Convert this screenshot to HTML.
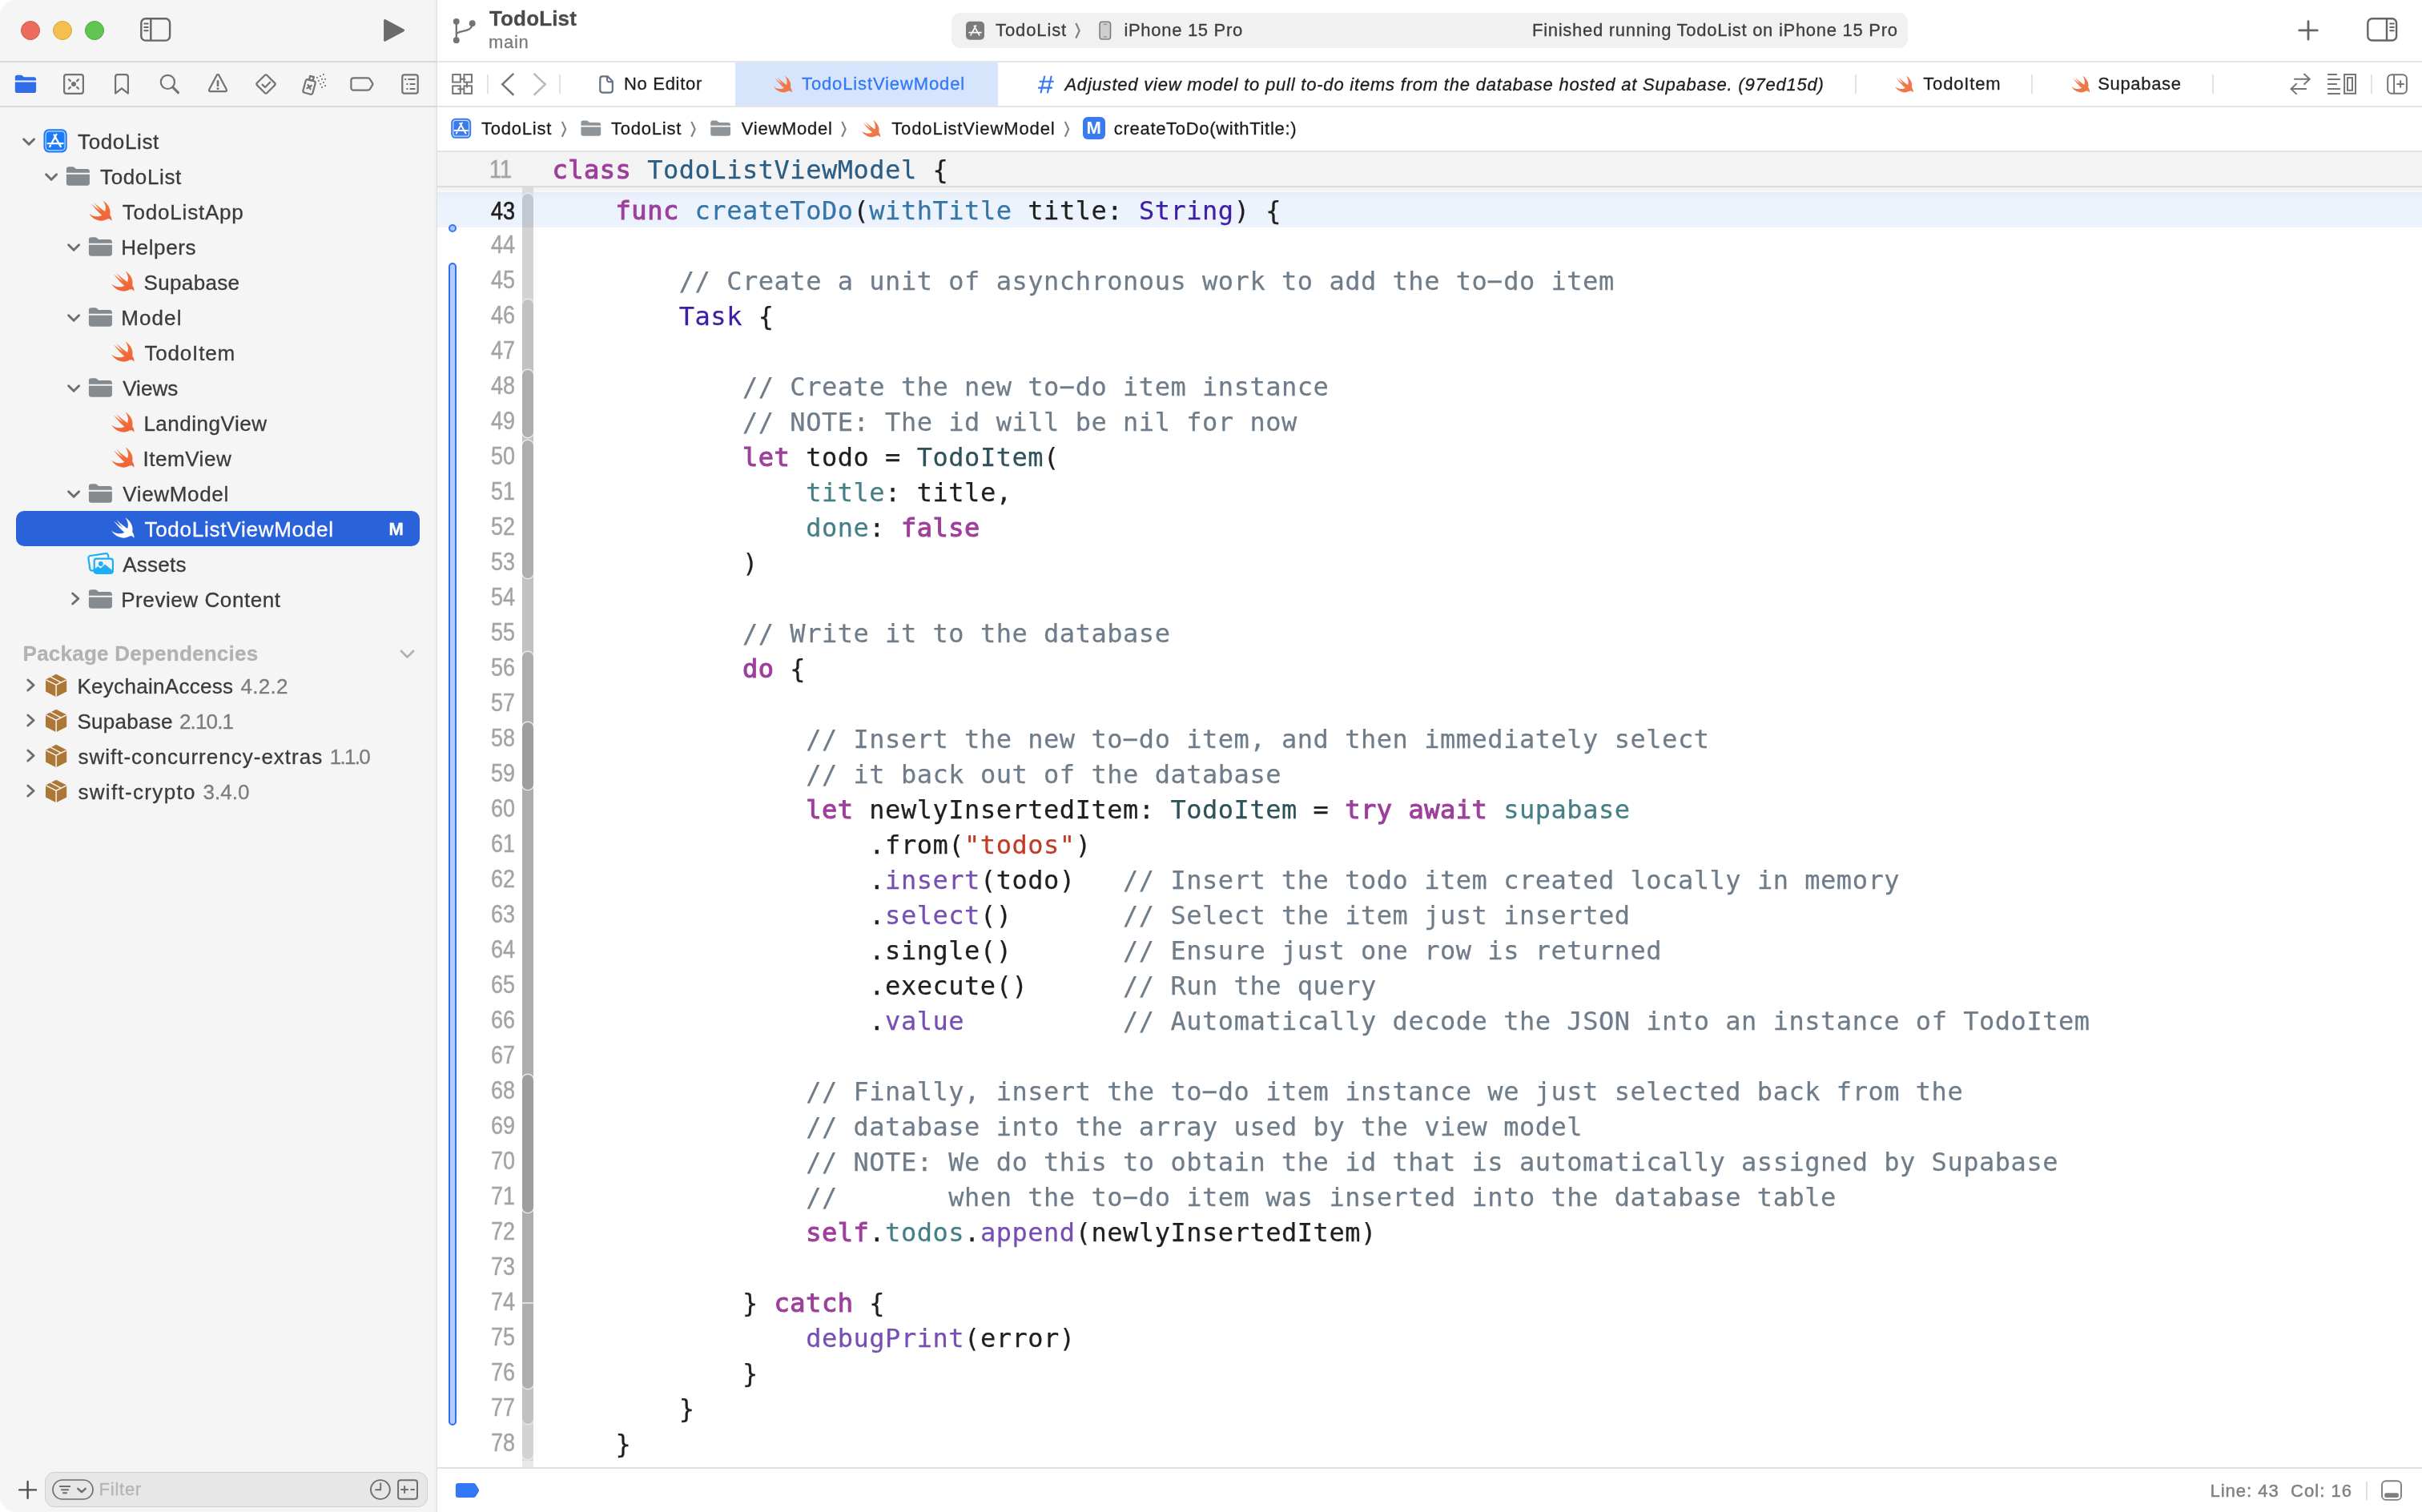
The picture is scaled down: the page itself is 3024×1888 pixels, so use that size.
<!DOCTYPE html>
<html lang="en"><head><meta charset="utf-8"><title>TodoList — TodoListViewModel.swift</title>
<style>
*{box-sizing:border-box;margin:0;padding:0}
html,body{width:3024px;height:1888px;overflow:hidden;background:#fff}
body{font-family:"Liberation Sans",sans-serif;color:#262626;position:relative;-webkit-font-smoothing:antialiased}
.a{position:absolute}
.t{position:absolute;white-space:pre;line-height:1;-webkit-text-stroke:0.3px currentColor}
svg{position:absolute;overflow:visible}
#win{position:absolute;left:0;top:0;width:3024px;height:1888px;border-radius:20px 0 0 20px;overflow:hidden;background:#fff;will-change:transform}
#side{position:absolute;left:0;top:0;width:545px;height:1888px;background:#f5f5f5}
.hl{position:absolute;background:#dcdcdc}
.code{position:absolute;white-space:pre;font-family:"DejaVu Sans Mono","Liberation Mono",monospace;font-size:32px;line-height:44px;height:44px;color:#1f1f1f;letter-spacing:0.53px;-webkit-text-stroke:0.25px currentColor}
.ln{position:absolute;white-space:pre;font-size:31px;line-height:44px;height:44px;color:#a3a3a3;text-align:right;width:100px;transform-origin:100% 50%;transform:scaleX(.87);-webkit-text-stroke:0.45px currentColor}
.hy{display:inline-block;transform:scaleX(2.05) translateY(-1px)}
.k{color:#9d3f9b;-webkit-text-stroke:1.05px #9d3f9b}
.c{color:#6f7c8a}
.s{color:#c23b26}
.dt{color:#2a5d84}
.df{color:#3576a7}
.sy{color:#3e1fa3}
.pt{color:#2d5259}
.pv{color:#457f86}
.of{color:#764eb4}
</style></head>
<body>
<div id="win">
<svg width="0" height="0" style="left:0;top:0"><defs><linearGradient id="sw" x1="0" y1="0" x2="0.3" y2="1"><stop offset="0" stop-color="#f37e3d"/><stop offset="1" stop-color="#ef6538"/></linearGradient></defs></svg>
<div id="side"></div>
<div class="a" style="left:541px;top:0px;width:4px;height:1888px;background:linear-gradient(90deg,#f5f5f5,#ededed);"></div>
<div class="a" style="left:545px;top:0px;width:1px;height:1888px;background:#dedede;"></div>
<div class="a" style="left:546px;top:190px;width:2478px;height:43px;background:#f3f3f3;"></div>
<div class="a" style="left:0px;top:76px;width:545px;height:2px;background:#d9d9d9;"></div>
<div class="a" style="left:546px;top:76px;width:2478px;height:2px;background:#e6e6e6;"></div>
<div class="a" style="left:0px;top:132px;width:545px;height:2px;background:#d9d9d9;"></div>
<div class="a" style="left:546px;top:132px;width:2478px;height:2px;background:#e4e4e4;"></div>
<div class="a" style="left:546px;top:188px;width:2478px;height:2px;background:#e2e2e2;"></div>
<div class="a" style="left:546px;top:232px;width:2478px;height:2px;background:#dadada;"></div>
<div class="a" style="left:546px;top:234px;width:2478px;height:6px;background:linear-gradient(#f0f0f0,#f8f8f8);"></div>
<div class="a" style="left:546px;top:1832px;width:2478px;height:2px;background:#e1e1e1;"></div>
<div class="a" style="left:26px;top:26px;width:24px;height:24px;background:#ed6a5e;border-radius:50%;border:1px solid #d5554a"></div>
<div class="a" style="left:66px;top:26px;width:24px;height:24px;background:#f5bf4f;border-radius:50%;border:1px solid #d9a23b"></div>
<div class="a" style="left:106px;top:26px;width:24px;height:24px;background:#61c554;border-radius:50%;border:1px solid #4ba83f"></div>
<svg style="left:173px;top:20px" width="43" height="34" viewBox="173 20 43 34" ><rect x="176.3" y="23.3" width="35.8" height="27.3" rx="5.5" fill="none" stroke="#666" stroke-width="2.4"/><path d="M188.3 23.3V50.6" stroke="#666" stroke-width="2.4"/><path d="M180.3 29.6h4.4M180.3 33.9h4.4M180.3 38.3h4.4" stroke="#666" stroke-width="2" stroke-linecap="round"/></svg>
<svg style="left:476px;top:22px" width="32" height="32" viewBox="476 22 32 32" ><path d="M480.6 25.6 L503.6 37.9 L480.6 50.2z" fill="#6b6b6b" stroke="#6b6b6b" stroke-width="3" stroke-linejoin="round"/></svg>
<svg style="left:563px;top:20px" width="33" height="36" viewBox="563 20 33 36" ><g fill="#737373"><circle cx="569.8" cy="26.8" r="3.9"/><circle cx="589.7" cy="29.2" r="3.9"/><circle cx="569.8" cy="50.2" r="3.9"/></g><path d="M569.8 26.8V50.2M569.8 43.5c0-6.5 19.9-1.5 19.9-14.3" fill="none" stroke="#737373" stroke-width="2.3"/></svg>
<div class="t " style="left:611.00px;top:10.0px;font-size:26px;color:#4a4a4a;font-weight:bold;letter-spacing:0.143px;">TodoList</div>
<div class="t " style="left:610.00px;top:42.2px;font-size:22px;color:#7a7a7a;letter-spacing:0.700px;">main</div>
<div class="a" style="left:1188px;top:16px;width:1194px;height:44px;background:#f1f1f1;border-radius:11px"></div>
<svg style="left:1205px;top:26px" width="26" height="25" viewBox="1205 26 26 25" ><rect x="1206" y="26.8" width="23" height="23" rx="5" fill="#7b7b7b"/><path fill="none" stroke="#fff" stroke-width="1.7" stroke-linecap="round" d="M1213.73 40.96 L1218.57 31.94 M1212.09 43.91 L1212.74 42.76 M1216.27 32.43 L1222.75 43.91 M1210.12 40.71 L1224.88 40.71"/></svg>
<div class="t " style="left:1243.00px;top:26.8px;font-size:22px;color:#3d3d3d;letter-spacing:0.899px;">TodoList</div>
<svg style="left:1341px;top:27px" width="9" height="22" viewBox="1341 27 9 22" ><path fill="none" stroke="#7d7d7d" stroke-width="2.1" stroke-linejoin="miter" d="M1343.30 28.90 L1347.70 38.30 L1343.30 47.70"/></svg>
<svg style="left:1371px;top:25px" width="18" height="26" viewBox="1371 25 18 26" ><rect x="1373.1" y="27.2" width="13.4" height="21.8" rx="3" fill="#cfcfcf" stroke="#7d7d7d" stroke-width="1.6"/><path d="M1377.6 30.2h4.4M1377.6 46h4.4" stroke="#7d7d7d" stroke-width="1.1"/></svg>
<div class="t " style="left:1403.40px;top:26.8px;font-size:22px;color:#3d3d3d;letter-spacing:0.701px;">iPhone 15 Pro</div>
<div class="t " style="left:1913.00px;top:26.8px;font-size:22px;color:#3d3d3d;letter-spacing:0.720px;">Finished running TodoList on iPhone 15 Pro</div>
<svg style="left:2868px;top:24px" width="28" height="28" viewBox="2868 24 28 28" ><path d="M2870.7 37.9H2893.3M2882 26.6V49.2" stroke="#666" stroke-width="2.8" stroke-linecap="round"/></svg>
<svg style="left:2953px;top:20px" width="43" height="34" viewBox="2953 20 43 34" ><rect x="2956.3" y="23.2" width="35.8" height="27.3" rx="5.5" fill="none" stroke="#666" stroke-width="2.4"/><path d="M2980 23.2V50.5" stroke="#666" stroke-width="2.4"/><path d="M2984.2 29.6h4.6M2984.2 33.9h4.6M2984.2 38.2h4.6" stroke="#666" stroke-width="2" stroke-linecap="round"/></svg>
<svg style="left:17px;top:92px" width="30" height="26" viewBox="17 92 30 26" ><path fill="#2f6de9" d="M21.70 93.70 H26.06 q1.09 0 1.81 0.82 l1.45 1.18 q0.82 0.63 1.81 0.63 H42.20 a2.90 2.90 0 0 1 2.90 2.90 V100.50 H18.80 V96.60 a2.90 2.90 0 0 1 2.90 -2.90 z M18.80 102.41 H45.10 V113.20 a2.90 2.90 0 0 1 -2.90 2.90 H21.70 a2.90 2.90 0 0 1 -2.90 -2.90 z"/></svg>
<svg style="left:77px;top:90px" width="30" height="30" viewBox="77 90 30 30" ><rect x="80.1" y="93.1" width="23.8" height="23.8" rx="2.8" fill="none" stroke="#737373" stroke-width="2.2" stroke-linejoin="round" stroke-linecap="round"/><circle cx="92" cy="105" r="3" fill="#737373"/><path d="M86 99.2l1.900 1.900M98 99.200l-1.900 1.900M86 110.800l1.900-1.900M98 110.800l-1.900-1.900" fill="none" stroke="#737373" stroke-width="2.2" stroke-linejoin="round" stroke-linecap="round"/></svg>
<svg style="left:141px;top:90px" width="22" height="30" viewBox="141 90 22 30" ><path d="M144.1 116.6V96.1a3 3 0 0 1 3-3h9.8a3 3 0 0 1 3 3v20.5l-7.9-6.3z" fill="none" stroke="#737373" stroke-width="2.2" stroke-linejoin="round" stroke-linecap="round"/></svg>
<svg style="left:198px;top:91px" width="28" height="28" viewBox="198 91 28 28" ><circle cx="209.4" cy="102.4" r="8.6" fill="none" stroke="#737373" stroke-width="2.2" stroke-linejoin="round" stroke-linecap="round"/><path d="M215.8 109l6.6 6.7" fill="none" stroke="#737373" stroke-width="3.2" stroke-linecap="round"/></svg>
<svg style="left:258px;top:90px" width="28" height="28" viewBox="258 90 28 28" ><path d="M270.600 94a1.600 1.600 0 0 1 2.800 0l9.400 17.800a1.600 1.600 0 0 1-1.400 2.400h-18.800a1.600 1.600 0 0 1-1.400-2.400z" fill="none" stroke="#737373" stroke-width="2.2" stroke-linejoin="round" stroke-linecap="round"/><path d="M272 101.2v5.8" stroke="#737373" stroke-width="2.6" stroke-linecap="round"/><circle cx="272" cy="110.7" r="1.5" fill="#737373"/></svg>
<svg style="left:317px;top:90px" width="30" height="30" viewBox="317 90 30 30" ><path d="M330.6 94a2 2 0 0 1 2.8 0l9.6 9.6a2 2 0 0 1 0 2.8l-9.6 9.6a2 2 0 0 1-2.8 0l-9.6-9.6a2 2 0 0 1 0-2.8z" fill="none" stroke="#737373" stroke-width="2.2" stroke-linejoin="round" stroke-linecap="round"/><path d="M327.5 105.6l3.5 3.4l6.2-6.3" fill="none" stroke="#737373" stroke-width="2.2" stroke-linejoin="round" stroke-linecap="round"/></svg>
<svg style="left:375px;top:90px" width="34" height="31" viewBox="375 90 34 31" ><g transform="rotate(15 386 108)"><rect x="380" y="100" width="12.400" height="17" rx="2.400" fill="none" stroke="#737373" stroke-width="2.2" stroke-linejoin="round" stroke-linecap="round"/><rect x="383.800" y="95" width="4.800" height="5" fill="none" stroke="#737373" stroke-width="2.2" stroke-linejoin="round" stroke-linecap="round"/><path d="M384 106.3l4.4 4.4M388.4 106.3l-4.4 4.4" fill="none" stroke="#737373" stroke-width="2.2" stroke-linejoin="round" stroke-linecap="round"/></g><rect x="403.0" y="92.0" width="1.8" height="1.8" fill="#737373"/><rect x="399.1" y="94.0" width="1.8" height="1.8" fill="#737373"/><rect x="395.0" y="96.0" width="1.8" height="1.8" fill="#737373"/><rect x="401.1" y="97.9" width="1.8" height="1.8" fill="#737373"/><rect x="405.2" y="97.9" width="1.8" height="1.8" fill="#737373"/><rect x="397.0" y="100.0" width="1.8" height="1.8" fill="#737373"/><rect x="403.0" y="102.0" width="1.8" height="1.8" fill="#737373"/><rect x="399.1" y="104.0" width="1.8" height="1.8" fill="#737373"/><rect x="405.2" y="106.2" width="1.8" height="1.8" fill="#737373"/><rect x="401.1" y="108.1" width="1.8" height="1.8" fill="#737373"/></svg>
<svg style="left:435px;top:94px" width="34" height="22" viewBox="435 94 34 22" ><path d="M441.4 97.3h17.8a3 3 0 0 1 2.5 1.3l3.4 5.3a2 2 0 0 1 0 2.2l-3.4 5.3a3 3 0 0 1-2.5 1.3h-17.8a3 3 0 0 1-3-3v-9.400a3 3 0 0 1 3-3z" fill="none" stroke="#737373" stroke-width="2.2" stroke-linejoin="round" stroke-linecap="round"/></svg>
<svg style="left:499px;top:90px" width="26" height="30" viewBox="499 90 26 30" ><rect x="502.300" y="93.300" width="19.400" height="23.400" rx="2.700" fill="none" stroke="#737373" stroke-width="2.2" stroke-linejoin="round" stroke-linecap="round"/><path d="M509.4 99h9M511.6 105h6.800M511.600 111h6.800" stroke="#737373" stroke-width="2.200" fill="none"/><path d="M505.2 99h2M507.4 105h2M507.4 111h2" stroke="#737373" stroke-width="2.200" fill="none"/></svg>
<svg style="left:26px;top:170px" width="21" height="14" viewBox="26 170 21 14" ><path fill="none" stroke="#6e6e6e" stroke-width="3" stroke-linecap="round" stroke-linejoin="round" d="M29.60 173.80 L36.10 180.30 L42.60 173.80"/></svg>
<svg style="left:53px;top:160px" width="32" height="32" viewBox="53 160 32 32" ><rect x="54.5" y="161.3" width="29.2" height="29.2" rx="6.5" fill="#1b7bf9"/><rect x="57.1" y="163.9" width="24.0" height="24.0" rx="4.3" fill="none" stroke="#fff" stroke-opacity=".75" stroke-width="1.2"/><path fill="none" stroke="#fff" stroke-width="2.2" stroke-linecap="round" d="M64.26 179.35 L70.47 167.79 M62.16 183.14 L63.00 181.67 M67.52 168.42 L75.83 183.14 M59.64 179.04 L78.56 179.04"/></svg>
<div class="t " style="left:97.00px;top:164.2px;font-size:26px;color:#3b3b3b;letter-spacing:0.628px;">TodoList</div>
<svg style="left:54px;top:214px" width="21" height="14" viewBox="54 214 21 14" ><path fill="none" stroke="#6e6e6e" stroke-width="3" stroke-linecap="round" stroke-linejoin="round" d="M57.60 217.80 L64.10 224.30 L70.60 217.80"/></svg>
<svg style="left:81px;top:207px" width="32" height="26" viewBox="81 207 32 26" ><path fill="#858a8f" d="M86.10 208.20 H90.90 q1.20 0 2.00 0.90 l1.60 1.30 q0.90 0.70 2.00 0.70 H108.70 a3.20 3.20 0 0 1 3.20 3.20 V215.70 H82.90 V211.40 a3.20 3.20 0 0 1 3.20 -3.20 z M82.90 217.80 H111.90 V228.60 a3.20 3.20 0 0 1 -3.20 3.20 H86.10 a3.20 3.20 0 0 1 -3.20 -3.20 z"/></svg>
<div class="t " style="left:125.00px;top:208.2px;font-size:26px;color:#3b3b3b;letter-spacing:0.628px;">TodoList</div>
<svg style="left:109px;top:248px" width="33" height="30" viewBox="109 248 33 30" ><path transform="translate(125.40 263.30) scale(1.5604) translate(-11.5 -11.65)" fill="url(#sw)" d="M13.543 3.41c4.114 2.47 6.545 7.162 5.549 11.131-.024.093-.05.181-.076.272l.002.001c2.062 2.538 1.5 5.258 1.236 4.745-1.072-2.086-3.066-1.568-4.088-1.043a6.803 6.803 0 0 1-.281.158l-.02.012-.002.002c-2.115 1.123-4.957 1.205-7.812-.022a12.568 12.568 0 0 1-5.64-4.838c.649.48 1.35.902 2.097 1.252 3.019 1.414 6.051 1.311 8.197-.002C9.651 12.73 7.101 9.67 5.146 7.191a10.628 10.628 0 0 1-1.005-1.384c2.34 2.142 6.038 4.83 7.365 5.576C8.69 8.408 6.208 4.743 6.324 4.86c4.436 4.47 8.528 6.996 8.528 6.996.154.085.27.154.36.214.085-.215.16-.437.224-.668.708-2.588-.09-5.548-1.893-7.992z"/></svg>
<div class="t " style="left:152.80px;top:252.2px;font-size:26px;color:#3b3b3b;letter-spacing:0.790px;">TodoListApp</div>
<svg style="left:82px;top:302px" width="21" height="14" viewBox="82 302 21 14" ><path fill="none" stroke="#6e6e6e" stroke-width="3" stroke-linecap="round" stroke-linejoin="round" d="M85.60 305.80 L92.10 312.30 L98.60 305.80"/></svg>
<svg style="left:109px;top:295px" width="32" height="26" viewBox="109 295 32 26" ><path fill="#858a8f" d="M114.10 296.20 H118.90 q1.20 0 2.00 0.90 l1.60 1.30 q0.90 0.70 2.00 0.70 H136.70 a3.20 3.20 0 0 1 3.20 3.20 V303.70 H110.90 V299.40 a3.20 3.20 0 0 1 3.20 -3.20 z M110.90 305.80 H139.90 V316.60 a3.20 3.20 0 0 1 -3.20 3.20 H114.10 a3.20 3.20 0 0 1 -3.20 -3.20 z"/></svg>
<div class="t " style="left:151.20px;top:296.2px;font-size:26px;color:#3b3b3b;letter-spacing:0.633px;">Helpers</div>
<svg style="left:137px;top:336px" width="33" height="30" viewBox="137 336 33 30" ><path transform="translate(153.40 351.30) scale(1.5604) translate(-11.5 -11.65)" fill="url(#sw)" d="M13.543 3.41c4.114 2.47 6.545 7.162 5.549 11.131-.024.093-.05.181-.076.272l.002.001c2.062 2.538 1.5 5.258 1.236 4.745-1.072-2.086-3.066-1.568-4.088-1.043a6.803 6.803 0 0 1-.281.158l-.02.012-.002.002c-2.115 1.123-4.957 1.205-7.812-.022a12.568 12.568 0 0 1-5.64-4.838c.649.48 1.35.902 2.097 1.252 3.019 1.414 6.051 1.311 8.197-.002C9.651 12.73 7.101 9.67 5.146 7.191a10.628 10.628 0 0 1-1.005-1.384c2.34 2.142 6.038 4.83 7.365 5.576C8.69 8.408 6.208 4.743 6.324 4.86c4.436 4.47 8.528 6.996 8.528 6.996.154.085.27.154.36.214.085-.215.16-.437.224-.668.708-2.588-.09-5.548-1.893-7.992z"/></svg>
<div class="t " style="left:179.60px;top:340.2px;font-size:26px;color:#3b3b3b;letter-spacing:0.328px;">Supabase</div>
<svg style="left:82px;top:390px" width="21" height="14" viewBox="82 390 21 14" ><path fill="none" stroke="#6e6e6e" stroke-width="3" stroke-linecap="round" stroke-linejoin="round" d="M85.60 393.80 L92.10 400.30 L98.60 393.80"/></svg>
<svg style="left:109px;top:383px" width="32" height="26" viewBox="109 383 32 26" ><path fill="#858a8f" d="M114.10 384.20 H118.90 q1.20 0 2.00 0.90 l1.60 1.30 q0.90 0.70 2.00 0.70 H136.70 a3.20 3.20 0 0 1 3.20 3.20 V391.70 H110.90 V387.40 a3.20 3.20 0 0 1 3.20 -3.20 z M110.90 393.80 H139.90 V404.60 a3.20 3.20 0 0 1 -3.20 3.20 H114.10 a3.20 3.20 0 0 1 -3.20 -3.20 z"/></svg>
<div class="t " style="left:151.20px;top:384.2px;font-size:26px;color:#3b3b3b;letter-spacing:1.100px;">Model</div>
<svg style="left:137px;top:424px" width="33" height="30" viewBox="137 424 33 30" ><path transform="translate(153.40 439.30) scale(1.5604) translate(-11.5 -11.65)" fill="url(#sw)" d="M13.543 3.41c4.114 2.47 6.545 7.162 5.549 11.131-.024.093-.05.181-.076.272l.002.001c2.062 2.538 1.5 5.258 1.236 4.745-1.072-2.086-3.066-1.568-4.088-1.043a6.803 6.803 0 0 1-.281.158l-.02.012-.002.002c-2.115 1.123-4.957 1.205-7.812-.022a12.568 12.568 0 0 1-5.64-4.838c.649.48 1.35.902 2.097 1.252 3.019 1.414 6.051 1.311 8.197-.002C9.651 12.73 7.101 9.67 5.146 7.191a10.628 10.628 0 0 1-1.005-1.384c2.34 2.142 6.038 4.83 7.365 5.576C8.69 8.408 6.208 4.743 6.324 4.86c4.436 4.47 8.528 6.996 8.528 6.996.154.085.27.154.36.214.085-.215.16-.437.224-.668.708-2.588-.09-5.548-1.893-7.992z"/></svg>
<div class="t " style="left:180.40px;top:428.2px;font-size:26px;color:#3b3b3b;letter-spacing:0.829px;">TodoItem</div>
<svg style="left:82px;top:478px" width="21" height="14" viewBox="82 478 21 14" ><path fill="none" stroke="#6e6e6e" stroke-width="3" stroke-linecap="round" stroke-linejoin="round" d="M85.60 481.80 L92.10 488.30 L98.60 481.80"/></svg>
<svg style="left:109px;top:471px" width="32" height="26" viewBox="109 471 32 26" ><path fill="#858a8f" d="M114.10 472.20 H118.90 q1.20 0 2.00 0.90 l1.60 1.30 q0.90 0.70 2.00 0.70 H136.70 a3.20 3.20 0 0 1 3.20 3.20 V479.70 H110.90 V475.40 a3.20 3.20 0 0 1 3.20 -3.20 z M110.90 481.80 H139.90 V492.60 a3.20 3.20 0 0 1 -3.20 3.20 H114.10 a3.20 3.20 0 0 1 -3.20 -3.20 z"/></svg>
<div class="t " style="left:153.20px;top:472.2px;font-size:26px;color:#3b3b3b;letter-spacing:0.050px;">Views</div>
<svg style="left:137px;top:512px" width="33" height="30" viewBox="137 512 33 30" ><path transform="translate(153.40 527.30) scale(1.5604) translate(-11.5 -11.65)" fill="url(#sw)" d="M13.543 3.41c4.114 2.47 6.545 7.162 5.549 11.131-.024.093-.05.181-.076.272l.002.001c2.062 2.538 1.5 5.258 1.236 4.745-1.072-2.086-3.066-1.568-4.088-1.043a6.803 6.803 0 0 1-.281.158l-.02.012-.002.002c-2.115 1.123-4.957 1.205-7.812-.022a12.568 12.568 0 0 1-5.64-4.838c.649.48 1.35.902 2.097 1.252 3.019 1.414 6.051 1.311 8.197-.002C9.651 12.73 7.101 9.67 5.146 7.191a10.628 10.628 0 0 1-1.005-1.384c2.34 2.142 6.038 4.83 7.365 5.576C8.69 8.408 6.208 4.743 6.324 4.86c4.436 4.47 8.528 6.996 8.528 6.996.154.085.27.154.36.214.085-.215.16-.437.224-.668.708-2.588-.09-5.548-1.893-7.992z"/></svg>
<div class="t " style="left:179.40px;top:516.2px;font-size:26px;color:#3b3b3b;letter-spacing:0.510px;">LandingView</div>
<svg style="left:137px;top:556px" width="33" height="30" viewBox="137 556 33 30" ><path transform="translate(153.40 571.30) scale(1.5604) translate(-11.5 -11.65)" fill="url(#sw)" d="M13.543 3.41c4.114 2.47 6.545 7.162 5.549 11.131-.024.093-.05.181-.076.272l.002.001c2.062 2.538 1.5 5.258 1.236 4.745-1.072-2.086-3.066-1.568-4.088-1.043a6.803 6.803 0 0 1-.281.158l-.02.012-.002.002c-2.115 1.123-4.957 1.205-7.812-.022a12.568 12.568 0 0 1-5.64-4.838c.649.48 1.35.902 2.097 1.252 3.019 1.414 6.051 1.311 8.197-.002C9.651 12.73 7.101 9.67 5.146 7.191a10.628 10.628 0 0 1-1.005-1.384c2.34 2.142 6.038 4.83 7.365 5.576C8.69 8.408 6.208 4.743 6.324 4.86c4.436 4.47 8.528 6.996 8.528 6.996.154.085.27.154.36.214.085-.215.16-.437.224-.668.708-2.588-.09-5.548-1.893-7.992z"/></svg>
<div class="t " style="left:178.40px;top:560.2px;font-size:26px;color:#3b3b3b;letter-spacing:0.557px;">ItemView</div>
<svg style="left:82px;top:610px" width="21" height="14" viewBox="82 610 21 14" ><path fill="none" stroke="#6e6e6e" stroke-width="3" stroke-linecap="round" stroke-linejoin="round" d="M85.60 613.80 L92.10 620.30 L98.60 613.80"/></svg>
<svg style="left:109px;top:603px" width="32" height="26" viewBox="109 603 32 26" ><path fill="#858a8f" d="M114.10 604.20 H118.90 q1.20 0 2.00 0.90 l1.60 1.30 q0.90 0.70 2.00 0.70 H136.70 a3.20 3.20 0 0 1 3.20 3.20 V611.70 H110.90 V607.40 a3.20 3.20 0 0 1 3.20 -3.20 z M110.90 613.80 H139.90 V624.60 a3.20 3.20 0 0 1 -3.20 3.20 H114.10 a3.20 3.20 0 0 1 -3.20 -3.20 z"/></svg>
<div class="t " style="left:153.20px;top:604.2px;font-size:26px;color:#3b3b3b;letter-spacing:0.661px;">ViewModel</div>
<div class="a" style="left:20px;top:638px;width:504px;height:44px;background:#2a62da;border-radius:10px"></div>
<svg style="left:137px;top:644px" width="33" height="30" viewBox="137 644 33 30" ><path transform="translate(153.40 659.30) scale(1.5604) translate(-11.5 -11.65)" fill="#fff" d="M13.543 3.41c4.114 2.47 6.545 7.162 5.549 11.131-.024.093-.05.181-.076.272l.002.001c2.062 2.538 1.5 5.258 1.236 4.745-1.072-2.086-3.066-1.568-4.088-1.043a6.803 6.803 0 0 1-.281.158l-.02.012-.002.002c-2.115 1.123-4.957 1.205-7.812-.022a12.568 12.568 0 0 1-5.64-4.838c.649.48 1.35.902 2.097 1.252 3.019 1.414 6.051 1.311 8.197-.002C9.651 12.73 7.101 9.67 5.146 7.191a10.628 10.628 0 0 1-1.005-1.384c2.34 2.142 6.038 4.83 7.365 5.576C8.69 8.408 6.208 4.743 6.324 4.86c4.436 4.47 8.528 6.996 8.528 6.996.154.085.27.154.36.214.085-.215.16-.437.224-.668.708-2.588-.09-5.548-1.893-7.992z"/></svg>
<div class="t " style="left:180.40px;top:648.2px;font-size:26px;color:#fff;letter-spacing:0.756px;">TodoListViewModel</div>
<div class="t " style="left:485.50px;top:649.6px;font-size:22px;color:#fff;font-weight:bold;">M</div>
<svg style="left:106px;top:687px" width="39" height="33" viewBox="106 687 39 33" ><g fill="none" stroke="#1daef5" stroke-width="2.200" stroke-linejoin="round"><path d="M117.600 712.300l-2.300 0.300a2.600 2.600 0 0 1-3-2.200l-1.900-13.400a2.600 2.600 0 0 1 2.200-3l19.400-2.800a2.600 2.600 0 0 1 3 2.200l0.500 3.200"/><rect x="117.700" y="697.600" width="23.200" height="18.200" rx="3"/></g><circle cx="125.800" cy="704" r="2.900" fill="#1daef5"/><path d="M118 716v-5.200l4.300-3.700l3 2.600l5.800-4.900l9.600 7.700v3.500z" fill="#1daef5"/></svg>
<div class="t " style="left:153.20px;top:692.2px;font-size:26px;color:#3b3b3b;letter-spacing:0.260px;">Assets</div>
<svg style="left:87px;top:737px" width="14" height="21" viewBox="87 737 14 21" ><path fill="none" stroke="#6e6e6e" stroke-width="3" stroke-linecap="round" stroke-linejoin="round" d="M90.65 741.00 L97.85 747.50 L90.65 754.00"/></svg>
<svg style="left:109px;top:735px" width="32" height="26" viewBox="109 735 32 26" ><path fill="#858a8f" d="M114.10 736.20 H118.90 q1.20 0 2.00 0.90 l1.60 1.30 q0.90 0.70 2.00 0.70 H136.70 a3.20 3.20 0 0 1 3.20 3.20 V743.70 H110.90 V739.40 a3.20 3.20 0 0 1 3.20 -3.20 z M110.90 745.80 H139.90 V756.60 a3.20 3.20 0 0 1 -3.20 3.20 H114.10 a3.20 3.20 0 0 1 -3.20 -3.20 z"/></svg>
<div class="t " style="left:151.20px;top:736.2px;font-size:26px;color:#3b3b3b;letter-spacing:0.579px;">Preview Content</div>
<div class="t " style="left:28.60px;top:802.8px;font-size:26px;color:#b2b2b2;font-weight:bold;letter-spacing:0.237px;">Package Dependencies</div>
<svg style="left:497px;top:809px" width="23" height="15" viewBox="497 809 23 15" ><path fill="none" stroke="#b0b0b0" stroke-width="2.6" stroke-linecap="round" stroke-linejoin="round" d="M501.00 813.00 L508.50 820.50 L516.00 813.00"/></svg>
<svg style="left:31px;top:845px" width="15" height="21" viewBox="31 845 15 21" ><path fill="none" stroke="#6e6e6e" stroke-width="3" stroke-linecap="round" stroke-linejoin="round" d="M34.85 849.00 L42.05 855.50 L34.85 862.00"/></svg>
<svg style="left:55px;top:840px" width="30" height="32" viewBox="55 840 30 32" ><path fill="#ad7736" stroke="#ad7736" stroke-width="1.6" stroke-linejoin="round" d="M70.10 842.60 L82.40 849.00 L82.40 863.00 L70.10 869.40 L57.80 863.00 L57.80 849.00z"/><path fill="none" stroke="#f5f5f5" stroke-width="1.5" d="M57.30 848.80 L70.10 855.10 L82.90 848.80 M70.10 855.10 V870.40"/><path fill="none" stroke="#f5f5f5" stroke-width="1.5" d="M62.95 845.20 L76.25 852.05"/></svg>
<div class="t " style="left:96.40px;top:844.2px;font-size:26px;color:#3b3b3b;letter-spacing:0.300px;">KeychainAccess</div>
<div class="t " style="left:300.40px;top:844.2px;font-size:26px;color:#7c7c7c;letter-spacing:0.300px;">4.2.2</div>
<svg style="left:31px;top:889px" width="15" height="21" viewBox="31 889 15 21" ><path fill="none" stroke="#6e6e6e" stroke-width="3" stroke-linecap="round" stroke-linejoin="round" d="M34.85 893.00 L42.05 899.50 L34.85 906.00"/></svg>
<svg style="left:55px;top:884px" width="30" height="32" viewBox="55 884 30 32" ><path fill="#ad7736" stroke="#ad7736" stroke-width="1.6" stroke-linejoin="round" d="M70.10 886.60 L82.40 893.00 L82.40 907.00 L70.10 913.40 L57.80 907.00 L57.80 893.00z"/><path fill="none" stroke="#f5f5f5" stroke-width="1.5" d="M57.30 892.80 L70.10 899.10 L82.90 892.80 M70.10 899.10 V914.40"/><path fill="none" stroke="#f5f5f5" stroke-width="1.5" d="M62.95 889.20 L76.25 896.05"/></svg>
<div class="t " style="left:96.40px;top:888.2px;font-size:26px;color:#3b3b3b;letter-spacing:0.286px;">Supabase</div>
<div class="t " style="left:224.00px;top:888.2px;font-size:26px;color:#7c7c7c;letter-spacing:-0.860px;">2.10.1</div>
<svg style="left:31px;top:933px" width="15" height="21" viewBox="31 933 15 21" ><path fill="none" stroke="#6e6e6e" stroke-width="3" stroke-linecap="round" stroke-linejoin="round" d="M34.85 937.00 L42.05 943.50 L34.85 950.00"/></svg>
<svg style="left:55px;top:928px" width="30" height="32" viewBox="55 928 30 32" ><path fill="#ad7736" stroke="#ad7736" stroke-width="1.6" stroke-linejoin="round" d="M70.10 930.60 L82.40 937.00 L82.40 951.00 L70.10 957.40 L57.80 951.00 L57.80 937.00z"/><path fill="none" stroke="#f5f5f5" stroke-width="1.5" d="M57.30 936.80 L70.10 943.10 L82.90 936.80 M70.10 943.10 V958.40"/><path fill="none" stroke="#f5f5f5" stroke-width="1.5" d="M62.95 933.20 L76.25 940.05"/></svg>
<div class="t " style="left:97.40px;top:932.2px;font-size:26px;color:#3b3b3b;letter-spacing:1.003px;">swift-concurrency-extras</div>
<div class="t " style="left:411.80px;top:932.2px;font-size:26px;color:#7c7c7c;letter-spacing:-1.725px;">1.1.0</div>
<svg style="left:31px;top:977px" width="15" height="21" viewBox="31 977 15 21" ><path fill="none" stroke="#6e6e6e" stroke-width="3" stroke-linecap="round" stroke-linejoin="round" d="M34.85 981.00 L42.05 987.50 L34.85 994.00"/></svg>
<svg style="left:55px;top:972px" width="30" height="32" viewBox="55 972 30 32" ><path fill="#ad7736" stroke="#ad7736" stroke-width="1.6" stroke-linejoin="round" d="M70.10 974.60 L82.40 981.00 L82.40 995.00 L70.10 1001.40 L57.80 995.00 L57.80 981.00z"/><path fill="none" stroke="#f5f5f5" stroke-width="1.5" d="M57.30 980.80 L70.10 987.10 L82.90 980.80 M70.10 987.10 V1002.40"/><path fill="none" stroke="#f5f5f5" stroke-width="1.5" d="M62.95 977.20 L76.25 984.05"/></svg>
<div class="t " style="left:97.40px;top:976.2px;font-size:26px;color:#3b3b3b;letter-spacing:1.327px;">swift-crypto</div>
<div class="t " style="left:253.40px;top:976.2px;font-size:26px;color:#7c7c7c;letter-spacing:0.050px;">3.4.0</div>
<svg style="left:22px;top:1848px" width="26" height="26" viewBox="22 1848 26 26" ><path d="M24.200 1860.400h20.800M34.600 1850v20.800" stroke="#4f4f4f" stroke-width="2.400" stroke-linecap="round"/></svg>
<div class="a" style="left:56px;top:1838px;width:478px;height:44px;background:#e7e7e7;border-radius:12px;border:1px solid #cfcfcf"></div>
<svg style="left:63px;top:1845px" width="56" height="30" viewBox="63 1845 56 30" ><rect x="66" y="1848" width="50" height="24" rx="12" fill="none" stroke="#6e6e6e" stroke-width="1.7"/><path d="M74.100 1856.100h13.800M76.200 1860.200h9.700M78.200 1864.200h5.600" stroke="#6e6e6e" stroke-width="2"/><path d="M97.300 1858.800l4.700 4.400l4.700-4.400" fill="none" stroke="#6e6e6e" stroke-width="2.400" stroke-linecap="round" stroke-linejoin="round"/></svg>
<div class="t " style="left:123.60px;top:1848.9px;font-size:22px;color:#b4b4b4;letter-spacing:0.740px;">Filter</div>
<svg style="left:460px;top:1845px" width="30" height="30" viewBox="460 1845 30 30" ><circle cx="474.900" cy="1860" r="11.900" fill="none" stroke="#6e6e6e" stroke-width="1.900"/><path d="M475.200 1851.600v8.700h-6.900" fill="none" stroke="#6e6e6e" stroke-width="1.900"/></svg>
<svg style="left:494px;top:1845px" width="30" height="30" viewBox="494 1845 30 30" ><rect x="497.100" y="1848.200" width="23.900" height="23.600" rx="3" fill="none" stroke="#6e6e6e" stroke-width="2"/><path d="M500.400 1860h9.400M505.100 1855.300v9.400M512.500 1860h5.300" stroke="#6e6e6e" stroke-width="2"/></svg>
<svg style="left:562px;top:90px" width="30" height="30" viewBox="562 90 30 30" ><g fill="none" stroke="#757575" stroke-width="2"><rect x="565.200" y="93.100" width="9.600" height="9.500"/><rect x="579.400" y="93.100" width="9.600" height="9.500"/><rect x="565.200" y="107.300" width="9.600" height="9.600"/><rect x="579.400" y="107.300" width="9.600" height="9.600"/><path d="M574.800 98.800h6.500M583 102.600v6.800M571.500 111.200h7.900"/></g></svg>
<div class="a" style="left:608px;top:93px;width:2px;height:24px;background:#e2e2e2;"></div>
<div class="a" style="left:698px;top:93px;width:2px;height:24px;background:#e2e2e2;"></div>
<svg style="left:622px;top:88px" width="24" height="34" viewBox="622 88 24 34" ><path d="M640.400 92.700l-13.200 12.600l13.200 12.600" fill="none" stroke="#757575" stroke-width="2.500" stroke-linecap="square"/></svg>
<svg style="left:662px;top:88px" width="24" height="34" viewBox="662 88 24 34" ><path d="M667.500 92.700l13.200 12.600l-13.200 12.600" fill="none" stroke="#bababa" stroke-width="2.500" stroke-linecap="square"/></svg>
<svg style="left:746px;top:92px" width="22" height="27" viewBox="746 92 22 27" ><path d="M752.300 95.300h6.300l6.200 6.200v11.100a3 3 0 0 1-3 3h-9.500a3 3 0 0 1-3-3v-14.300a3 3 0 0 1 3-3z" fill="none" stroke="#5f7182" stroke-width="2.200" stroke-linejoin="round"/><path d="M758 95.600v4.200a2.400 2.400 0 0 0 2.400 2.400h4.200" fill="none" stroke="#5f7182" stroke-width="2"/></svg>
<div class="t " style="left:779.00px;top:94.4px;font-size:22px;color:#1f1f1f;letter-spacing:0.688px;">No Editor</div>
<div class="a" style="left:918px;top:78px;width:328px;height:54px;background:#d6e5fc;"></div>
<svg style="left:964px;top:93px" width="27" height="25" viewBox="964 93 27 25" ><path transform="translate(977.30 105.30) scale(1.2747) translate(-11.5 -11.65)" fill="#ef7748" d="M13.543 3.41c4.114 2.47 6.545 7.162 5.549 11.131-.024.093-.05.181-.076.272l.002.001c2.062 2.538 1.5 5.258 1.236 4.745-1.072-2.086-3.066-1.568-4.088-1.043a6.803 6.803 0 0 1-.281.158l-.02.012-.002.002c-2.115 1.123-4.957 1.205-7.812-.022a12.568 12.568 0 0 1-5.64-4.838c.649.48 1.35.902 2.097 1.252 3.019 1.414 6.051 1.311 8.197-.002C9.651 12.73 7.101 9.67 5.146 7.191a10.628 10.628 0 0 1-1.005-1.384c2.34 2.142 6.038 4.83 7.365 5.576C8.69 8.408 6.208 4.743 6.324 4.86c4.436 4.47 8.528 6.996 8.528 6.996.154.085.27.154.36.214.085-.215.16-.437.224-.668.708-2.588-.09-5.548-1.893-7.992z"/></svg>
<div class="t " style="left:1001.00px;top:94.4px;font-size:22px;color:#3478f6;letter-spacing:0.875px;">TodoListViewModel</div>
<svg style="left:1294px;top:93px" width="24" height="25" viewBox="1294 93 24 25" ><path d="M1304.200 95.500l-4.600 20M1312.600 95.500l-4.600 20M1298.600 101.800h16.300M1296.800 109.600h16.300" stroke="#3478f6" stroke-width="2.100" stroke-linecap="round"/></svg>
<div class="t " style="left:1329.40px;top:94.9px;font-size:22px;color:#1c1c1c;font-style:italic;letter-spacing:0.793px;">Adjusted view model to pull to-do items from the database hosted at Supabase. (97ed15d)</div>
<div class="a" style="left:2316px;top:93px;width:2px;height:24px;background:#e2e2e2;"></div>
<div class="a" style="left:2536px;top:93px;width:2px;height:24px;background:#e2e2e2;"></div>
<div class="a" style="left:2762px;top:93px;width:2px;height:24px;background:#e2e2e2;"></div>
<div class="a" style="left:2960px;top:93px;width:2px;height:24px;background:#e2e2e2;"></div>
<svg style="left:2364px;top:93px" width="27" height="25" viewBox="2364 93 27 25" ><path transform="translate(2377.30 105.30) scale(1.2747) translate(-11.5 -11.65)" fill="#ef7748" d="M13.543 3.41c4.114 2.47 6.545 7.162 5.549 11.131-.024.093-.05.181-.076.272l.002.001c2.062 2.538 1.5 5.258 1.236 4.745-1.072-2.086-3.066-1.568-4.088-1.043a6.803 6.803 0 0 1-.281.158l-.02.012-.002.002c-2.115 1.123-4.957 1.205-7.812-.022a12.568 12.568 0 0 1-5.64-4.838c.649.48 1.35.902 2.097 1.252 3.019 1.414 6.051 1.311 8.197-.002C9.651 12.73 7.101 9.67 5.146 7.191a10.628 10.628 0 0 1-1.005-1.384c2.34 2.142 6.038 4.83 7.365 5.576C8.69 8.408 6.208 4.743 6.324 4.86c4.436 4.47 8.528 6.996 8.528 6.996.154.085.27.154.36.214.085-.215.16-.437.224-.668.708-2.588-.09-5.548-1.893-7.992z"/></svg>
<div class="t " style="left:2401.20px;top:94.4px;font-size:22px;color:#1f1f1f;letter-spacing:0.857px;">TodoItem</div>
<svg style="left:2584px;top:93px" width="27" height="25" viewBox="2584 93 27 25" ><path transform="translate(2597.60 105.30) scale(1.2747) translate(-11.5 -11.65)" fill="#ef7748" d="M13.543 3.41c4.114 2.47 6.545 7.162 5.549 11.131-.024.093-.05.181-.076.272l.002.001c2.062 2.538 1.5 5.258 1.236 4.745-1.072-2.086-3.066-1.568-4.088-1.043a6.803 6.803 0 0 1-.281.158l-.02.012-.002.002c-2.115 1.123-4.957 1.205-7.812-.022a12.568 12.568 0 0 1-5.64-4.838c.649.48 1.35.902 2.097 1.252 3.019 1.414 6.051 1.311 8.197-.002C9.651 12.73 7.101 9.67 5.146 7.191a10.628 10.628 0 0 1-1.005-1.384c2.34 2.142 6.038 4.83 7.365 5.576C8.69 8.408 6.208 4.743 6.324 4.86c4.436 4.47 8.528 6.996 8.528 6.996.154.085.27.154.36.214.085-.215.16-.437.224-.668.708-2.588-.09-5.548-1.893-7.992z"/></svg>
<div class="t " style="left:2619.20px;top:94.4px;font-size:22px;color:#1f1f1f;letter-spacing:0.672px;">Supabase</div>
<svg style="left:2858px;top:90px" width="29" height="30" viewBox="2858 90 29 30" ><path d="M2865.100 98.800h18M2877.200 92.600l6.500 6.200l-6.500 6.200M2878.900 111h-18M2867 104.800l-6.500 6.200l6.500 6.200" fill="none" stroke="#757575" stroke-width="2" stroke-linecap="square"/></svg>
<svg style="left:2904px;top:90px" width="40" height="30" viewBox="2904 90 40 30" ><path d="M2906.100 93.100h11.800M2906.100 98.900h15.800M2906.100 104.900h11.800M2906.100 111h15.800M2906.100 117.100h15.800" stroke="#757575" stroke-width="2"/><rect x="2927.100" y="93" width="13.900" height="23.800" fill="none" stroke="#757575" stroke-width="2"/><rect x="2931" y="97.100" width="6" height="15.700" fill="none" stroke="#757575" stroke-width="2"/></svg>
<svg style="left:2978px;top:90px" width="30" height="30" viewBox="2978 90 30 30" ><rect x="2981.200" y="93.200" width="23.700" height="23.600" rx="5" fill="none" stroke="#757575" stroke-width="2"/><path d="M2989.100 93.200v23.600M2992.400 104.900h9.400M2997.100 100.200v9.400" stroke="#757575" stroke-width="2"/></svg>
<svg style="left:562px;top:146px" width="28" height="28" viewBox="562 146 28 28" ><rect x="563.2" y="147.8" width="25" height="25" rx="5.5" fill="#3b7bf0"/><rect x="565.8000000000001" y="150.4" width="19.8" height="19.8" rx="3.3" fill="none" stroke="#fff" stroke-opacity=".75" stroke-width="1.2"/><path fill="none" stroke="#fff" stroke-width="1.9" stroke-linecap="round" d="M571.56 163.30 L576.87 153.40 M569.76 166.54 L570.48 165.28 M574.35 153.94 L581.46 166.54 M567.60 163.03 L583.80 163.03"/></svg>
<div class="t " style="left:601.00px;top:149.8px;font-size:22px;color:#1c1c1c;letter-spacing:0.771px;">TodoList</div>
<svg style="left:700px;top:150px" width="9" height="22" viewBox="700 150 9 22" ><path fill="none" stroke="#7f7f7f" stroke-width="2.1" stroke-linejoin="miter" d="M701.80 151.90 L706.20 161.30 L701.80 170.70"/></svg>
<svg style="left:724px;top:149px" width="28" height="22" viewBox="724 149 28 22" ><path fill="#8e9498" d="M728.14 150.40 H732.24 q1.03 0 1.71 0.77 l1.37 1.11 q0.77 0.60 1.71 0.60 H747.46 a2.74 2.74 0 0 1 2.74 2.74 V156.81 H725.40 V153.14 a2.74 2.74 0 0 1 2.74 -2.74 z M725.40 158.61 H750.20 V166.96 a2.74 2.74 0 0 1 -2.74 2.74 H728.14 a2.74 2.74 0 0 1 -2.74 -2.74 z"/></svg>
<div class="t " style="left:763.00px;top:149.8px;font-size:22px;color:#1c1c1c;letter-spacing:0.786px;">TodoList</div>
<svg style="left:861px;top:150px" width="9" height="22" viewBox="861 150 9 22" ><path fill="none" stroke="#7f7f7f" stroke-width="2.1" stroke-linejoin="miter" d="M863.30 151.90 L867.70 161.30 L863.30 170.70"/></svg>
<svg style="left:886px;top:149px" width="28" height="22" viewBox="886 149 28 22" ><path fill="#8e9498" d="M889.94 150.40 H894.04 q1.03 0 1.71 0.77 l1.37 1.11 q0.77 0.60 1.71 0.60 H909.26 a2.74 2.74 0 0 1 2.74 2.74 V156.81 H887.20 V153.14 a2.74 2.74 0 0 1 2.74 -2.74 z M887.20 158.61 H912.00 V166.96 a2.74 2.74 0 0 1 -2.74 2.74 H889.94 a2.74 2.74 0 0 1 -2.74 -2.74 z"/></svg>
<div class="t " style="left:925.80px;top:149.8px;font-size:22px;color:#1c1c1c;letter-spacing:0.736px;">ViewModel</div>
<svg style="left:1049px;top:150px" width="9" height="22" viewBox="1049 150 9 22" ><path fill="none" stroke="#7f7f7f" stroke-width="2.1" stroke-linejoin="miter" d="M1051.30 151.90 L1055.70 161.30 L1051.30 170.70"/></svg>
<svg style="left:1074px;top:148px" width="27" height="26" viewBox="1074 148 27 26" ><path transform="translate(1087.40 160.80) scale(1.3077) translate(-11.5 -11.65)" fill="#ef7748" d="M13.543 3.41c4.114 2.47 6.545 7.162 5.549 11.131-.024.093-.05.181-.076.272l.002.001c2.062 2.538 1.5 5.258 1.236 4.745-1.072-2.086-3.066-1.568-4.088-1.043a6.803 6.803 0 0 1-.281.158l-.02.012-.002.002c-2.115 1.123-4.957 1.205-7.812-.022a12.568 12.568 0 0 1-5.64-4.838c.649.48 1.35.902 2.097 1.252 3.019 1.414 6.051 1.311 8.197-.002C9.651 12.73 7.101 9.67 5.146 7.191a10.628 10.628 0 0 1-1.005-1.384c2.34 2.142 6.038 4.83 7.365 5.576C8.69 8.408 6.208 4.743 6.324 4.86c4.436 4.47 8.528 6.996 8.528 6.996.154.085.27.154.36.214.085-.215.16-.437.224-.668.708-2.588-.09-5.548-1.893-7.992z"/></svg>
<div class="t " style="left:1113.20px;top:149.8px;font-size:22px;color:#1c1c1c;letter-spacing:0.900px;">TodoListViewModel</div>
<svg style="left:1328px;top:150px" width="9" height="22" viewBox="1328 150 9 22" ><path fill="none" stroke="#7f7f7f" stroke-width="2.1" stroke-linejoin="miter" d="M1329.80 151.90 L1334.20 161.30 L1329.80 170.70"/></svg>
<div class="a" style="left:1352px;top:146px;width:28px;height:28px;background:#3b7bf0;border-radius:6px"></div>
<div class="t " style="left:1356.60px;top:149.4px;font-size:22px;color:#fff;font-weight:bold;-webkit-text-stroke:0;">M</div>
<div class="t " style="left:1390.80px;top:149.8px;font-size:22px;color:#1c1c1c;letter-spacing:0.696px;">createToDo(withTitle:)</div>
<div class="a" style="left:546px;top:240px;width:2478px;height:44px;background:linear-gradient(#e7edf8,#ecf3fd 9px);"></div>
<div class="a" style="left:652px;top:234px;width:14px;height:1598px;overflow:hidden;background:#dcdcdc">
<div class="a" style="left:0;top:8px;width:14px;height:1580px;background:#d3d3d3;border-radius:7px;box-shadow:0 0 0 1.5px #e8e8e8"></div>
<div class="a" style="left:0;top:140px;width:14px;height:1404px;background:#c1c1c1;border-radius:7px;box-shadow:0 0 0 1.5px #e8e8e8"></div>
<div class="a" style="left:0;top:228px;width:14px;height:84px;background:#adadad;border-radius:7px;box-shadow:0 0 0 1.5px #e8e8e8"></div>
<div class="a" style="left:0;top:316px;width:14px;height:172px;background:#adadad;border-radius:7px;box-shadow:0 0 0 1.5px #e8e8e8"></div>
<div class="a" style="left:0;top:580px;width:14px;height:920px;background:#adadad;border-radius:7px;box-shadow:0 0 0 1.5px #e8e8e8"></div>
<div class="a" style="left:0;top:668px;width:14px;height:84px;background:#9d9d9d;border-radius:7px;box-shadow:0 0 0 1.5px #e8e8e8"></div>
<div class="a" style="left:0;top:1108px;width:14px;height:172px;background:#9d9d9d;border-radius:7px;box-shadow:0 0 0 1.5px #e8e8e8"></div>
<div class="a" style="left:0;top:1392px;width:14px;height:2px;background:#dedede"></div>
<div class="a" style="left:0;top:1590px;width:14px;height:8px;background:#e9e9e9"></div>
<div class="a" style="left:0;top:6px;width:14px;height:44px;background:#d6dce6"></div>
<div class="a" style="left:0;top:8px;width:14px;height:50px;background:#c2c7d0;border-radius:7px 7px 0 0;box-shadow:0 0 0 1.5px #e6e9f0;clip-path:inset(-2px -2px 8px -2px)"></div>
</div>
<div class="a" style="left:560px;top:328px;width:10px;height:1452px;background:#b3ccfb;border-radius:5px;border:2px solid #2f6ff5"></div>
<div class="a" style="left:560px;top:280px;width:10px;height:10px;background:#a9c5fa;border-radius:50%;border:2px solid #3478f6"></div>
<div class="ln" style="left:539.3px;top:190.3px;">11</div>
<div class="code" style="left:689.4px;top:190px"><span class="k">class</span> <span class="dt">TodoListViewModel</span> {</div>
<div class="ln" style="left:542.5px;top:241.8px;color:#1f1f1f;-webkit-text-stroke:0.7px #1f1f1f;">43</div>
<div class="code" style="left:689.4px;top:241px">    <span class="k">func</span> <span class="df">createToDo</span>(<span class="df">withTitle</span> title: <span class="sy">String</span>) {</div>
<div class="ln" style="left:542.5px;top:283.8px;">44</div>
<div class="ln" style="left:542.5px;top:327.8px;">45</div>
<div class="code" style="left:689.4px;top:329px">        <span class="c">// Create a unit of asynchronous work to add the to<span class="hy">-</span>do item</span></div>
<div class="ln" style="left:542.5px;top:371.8px;">46</div>
<div class="code" style="left:689.4px;top:373px">        <span class="sy">Task</span> {</div>
<div class="ln" style="left:542.5px;top:415.8px;">47</div>
<div class="ln" style="left:542.5px;top:459.8px;">48</div>
<div class="code" style="left:689.4px;top:461px">            <span class="c">// Create the new to<span class="hy">-</span>do item instance</span></div>
<div class="ln" style="left:542.5px;top:503.8px;">49</div>
<div class="code" style="left:689.4px;top:505px">            <span class="c">// NOTE: The id will be nil for now</span></div>
<div class="ln" style="left:542.5px;top:547.8px;">50</div>
<div class="code" style="left:689.4px;top:549px">            <span class="k">let</span> todo = <span class="pt">TodoItem</span>(</div>
<div class="ln" style="left:542.5px;top:591.8px;">51</div>
<div class="code" style="left:689.4px;top:593px">                <span class="pv">title</span>: title,</div>
<div class="ln" style="left:542.5px;top:635.8px;">52</div>
<div class="code" style="left:689.4px;top:637px">                <span class="pv">done</span>: <span class="k">false</span></div>
<div class="ln" style="left:542.5px;top:679.8px;">53</div>
<div class="code" style="left:689.4px;top:681px">            )</div>
<div class="ln" style="left:542.5px;top:723.8px;">54</div>
<div class="ln" style="left:542.5px;top:767.8px;">55</div>
<div class="code" style="left:689.4px;top:769px">            <span class="c">// Write it to the database</span></div>
<div class="ln" style="left:542.5px;top:811.8px;">56</div>
<div class="code" style="left:689.4px;top:813px">            <span class="k">do</span> {</div>
<div class="ln" style="left:542.5px;top:855.8px;">57</div>
<div class="ln" style="left:542.5px;top:899.8px;">58</div>
<div class="code" style="left:689.4px;top:901px">                <span class="c">// Insert the new to<span class="hy">-</span>do item, and then immediately select</span></div>
<div class="ln" style="left:542.5px;top:943.8px;">59</div>
<div class="code" style="left:689.4px;top:945px">                <span class="c">// it back out of the database</span></div>
<div class="ln" style="left:542.5px;top:987.8px;">60</div>
<div class="code" style="left:689.4px;top:989px">                <span class="k">let</span> newlyInsertedItem: <span class="pt">TodoItem</span> = <span class="k">try</span> <span class="k">await</span> <span class="pv">supabase</span></div>
<div class="ln" style="left:542.5px;top:1031.8px;">61</div>
<div class="code" style="left:689.4px;top:1033px">                    .from(<span class="s">"todos"</span>)</div>
<div class="ln" style="left:542.5px;top:1075.8px;">62</div>
<div class="code" style="left:689.4px;top:1077px">                    .<span class="of">insert</span>(todo)   <span class="c">// Insert the todo item created locally in memory</span></div>
<div class="ln" style="left:542.5px;top:1119.8px;">63</div>
<div class="code" style="left:689.4px;top:1121px">                    .<span class="of">select</span>()       <span class="c">// Select the item just inserted</span></div>
<div class="ln" style="left:542.5px;top:1163.8px;">64</div>
<div class="code" style="left:689.4px;top:1165px">                    .single()       <span class="c">// Ensure just one row is returned</span></div>
<div class="ln" style="left:542.5px;top:1207.8px;">65</div>
<div class="code" style="left:689.4px;top:1209px">                    .execute()      <span class="c">// Run the query</span></div>
<div class="ln" style="left:542.5px;top:1251.8px;">66</div>
<div class="code" style="left:689.4px;top:1253px">                    .<span class="of">value</span>          <span class="c">// Automatically decode the JSON into an instance of TodoItem</span></div>
<div class="ln" style="left:542.5px;top:1295.8px;">67</div>
<div class="ln" style="left:542.5px;top:1339.8px;">68</div>
<div class="code" style="left:689.4px;top:1341px">                <span class="c">// Finally, insert the to<span class="hy">-</span>do item instance we just selected back from the</span></div>
<div class="ln" style="left:542.5px;top:1383.8px;">69</div>
<div class="code" style="left:689.4px;top:1385px">                <span class="c">// database into the array used by the view model</span></div>
<div class="ln" style="left:542.5px;top:1427.8px;">70</div>
<div class="code" style="left:689.4px;top:1429px">                <span class="c">// NOTE: We do this to obtain the id that is automatically assigned by Supabase</span></div>
<div class="ln" style="left:542.5px;top:1471.8px;">71</div>
<div class="code" style="left:689.4px;top:1473px">                <span class="c">//       when the to<span class="hy">-</span>do item was inserted into the database table</span></div>
<div class="ln" style="left:542.5px;top:1515.8px;">72</div>
<div class="code" style="left:689.4px;top:1517px">                <span class="k">self</span>.<span class="pv">todos</span>.<span class="of">append</span>(newlyInsertedItem)</div>
<div class="ln" style="left:542.5px;top:1559.8px;">73</div>
<div class="ln" style="left:542.5px;top:1603.8px;">74</div>
<div class="code" style="left:689.4px;top:1605px">            } <span class="k">catch</span> {</div>
<div class="ln" style="left:542.5px;top:1647.8px;">75</div>
<div class="code" style="left:689.4px;top:1649px">                <span class="of">debugPrint</span>(error)</div>
<div class="ln" style="left:542.5px;top:1691.8px;">76</div>
<div class="code" style="left:689.4px;top:1693px">            }</div>
<div class="ln" style="left:542.5px;top:1735.8px;">77</div>
<div class="code" style="left:689.4px;top:1737px">        }</div>
<div class="ln" style="left:542.5px;top:1779.8px;">78</div>
<div class="code" style="left:689.4px;top:1781px">    }</div>
<svg style="left:567px;top:1850px" width="33" height="22" viewBox="567 1850 33 22" ><path d="M571.900 1852h19.600a3 3 0 0 1 2.500 1.400l3.700 6a3 3 0 0 1 0 3.200l-3.700 6a3 3 0 0 1-2.500 1.400h-19.600a3 3 0 0 1-3-3v-12a3 3 0 0 1 3-3z" fill="#3478f6"/></svg>
<div class="t " style="left:2759.40px;top:1850.6px;font-size:22px;color:#808080;letter-spacing:1.019px;-webkit-text-stroke:0.5px #808080;">Line: 43  Col: 16</div>
<div class="a" style="left:2954px;top:1850px;width:2px;height:23px;background:#e0e0e0;"></div>
<svg style="left:2971px;top:1846px" width="30" height="30" viewBox="2971 1846 30 30" ><rect x="2974" y="1849.200" width="24" height="23.700" rx="5" fill="none" stroke="#808080" stroke-width="1.900"/><rect x="2977.200" y="1864.200" width="17.700" height="5.700" rx="2" fill="#808080"/></svg>
</div>
</body></html>
